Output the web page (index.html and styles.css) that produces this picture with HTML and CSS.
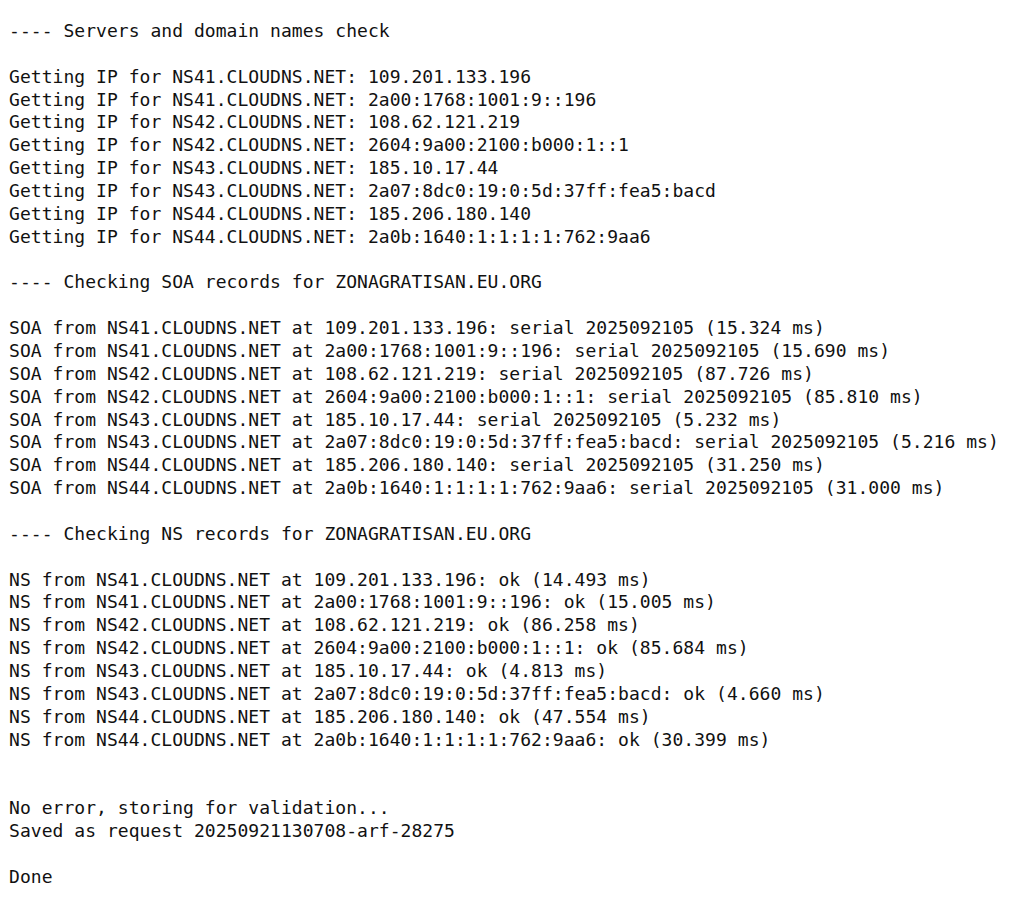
FILE: index.html
```html
<!DOCTYPE html>
<html>
<head>
<meta charset="utf-8">
<link rel="stylesheet" href="styles.css">
</head>
<body>
<pre class="log">---- Servers and domain names check

Getting IP for NS41.CLOUDNS.NET: 109.201.133.196
Getting IP for NS41.CLOUDNS.NET: 2a00:1768:1001:9::196
Getting IP for NS42.CLOUDNS.NET: 108.62.121.219
Getting IP for NS42.CLOUDNS.NET: 2604:9a00:2100:b000:1::1
Getting IP for NS43.CLOUDNS.NET: 185.10.17.44
Getting IP for NS43.CLOUDNS.NET: 2a07:8dc0:19:0:5d:37ff:fea5:bacd
Getting IP for NS44.CLOUDNS.NET: 185.206.180.140
Getting IP for NS44.CLOUDNS.NET: 2a0b:1640:1:1:1:1:762:9aa6

---- Checking SOA records for ZONAGRATISAN.EU.ORG

SOA from NS41.CLOUDNS.NET at 109.201.133.196: serial 2025092105 (15.324 ms)
SOA from NS41.CLOUDNS.NET at 2a00:1768:1001:9::196: serial 2025092105 (15.690 ms)
SOA from NS42.CLOUDNS.NET at 108.62.121.219: serial 2025092105 (87.726 ms)
SOA from NS42.CLOUDNS.NET at 2604:9a00:2100:b000:1::1: serial 2025092105 (85.810 ms)
SOA from NS43.CLOUDNS.NET at 185.10.17.44: serial 2025092105 (5.232 ms)
SOA from NS43.CLOUDNS.NET at 2a07:8dc0:19:0:5d:37ff:fea5:bacd: serial 2025092105 (5.216 ms)
SOA from NS44.CLOUDNS.NET at 185.206.180.140: serial 2025092105 (31.250 ms)
SOA from NS44.CLOUDNS.NET at 2a0b:1640:1:1:1:1:762:9aa6: serial 2025092105 (31.000 ms)

---- Checking NS records for ZONAGRATISAN.EU.ORG

NS from NS41.CLOUDNS.NET at 109.201.133.196: ok (14.493 ms)
NS from NS41.CLOUDNS.NET at 2a00:1768:1001:9::196: ok (15.005 ms)
NS from NS42.CLOUDNS.NET at 108.62.121.219: ok (86.258 ms)
NS from NS42.CLOUDNS.NET at 2604:9a00:2100:b000:1::1: ok (85.684 ms)
NS from NS43.CLOUDNS.NET at 185.10.17.44: ok (4.813 ms)
NS from NS43.CLOUDNS.NET at 2a07:8dc0:19:0:5d:37ff:fea5:bacd: ok (4.660 ms)
NS from NS44.CLOUDNS.NET at 185.206.180.140: ok (47.554 ms)
NS from NS44.CLOUDNS.NET at 2a0b:1640:1:1:1:1:762:9aa6: ok (30.399 ms)


No error, storing for validation...
Saved as request 20250921130708-arf-28275

Done</pre>
</body>
</html>
```

FILE: styles.css
```css
html, body {
  margin: 0;
  padding: 0;
  background: #ffffff;
}

.log {
  margin: 0;
  padding: 20px 0 0 9px;
  font-family: "DejaVu Sans Mono", "Liberation Mono", monospace;
  font-size: 18px;
  line-height: 22.86px;
  letter-spacing: 0.04px;
  color: #111111;
  white-space: pre;
}
```
